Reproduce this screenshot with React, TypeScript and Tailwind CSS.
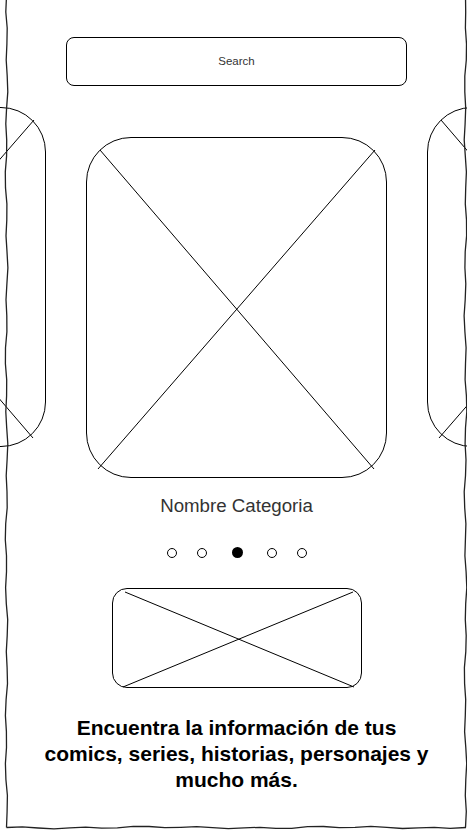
import React from 'react'

const font = "font-['Liberation_Sans',Arial,sans-serif]"

// hand-drawn looking line between two points
function wavy(x0: number, y0: number, x1: number, y1: number, seed: number) {
  const len = Math.hypot(x1 - x0, y1 - y0)
  const steps = Math.max(2, Math.round(len / 16))
  const nx = -(y1 - y0) / len
  const ny = (x1 - x0) / len
  let d = `M${x0} ${y0}`
  for (let i = 1; i <= steps; i++) {
    const t = i / steps
    const off =
      i === steps ? 0 : Math.sin(i * 1.7 + seed) * 0.8 + Math.sin(i * 0.53 + seed * 2) * 0.6
    const x = x0 + (x1 - x0) * t + nx * off
    const y = y0 + (y1 - y0) * t + ny * off
    d += ` L${x.toFixed(1)} ${y.toFixed(1)}`
  }
  return d
}

function Cross({ w, h, lines }: { w: number; h: number; lines: number[][] }) {
  return (
    <svg
      className="absolute inset-0"
      width={w}
      height={h}
      viewBox={`0 0 ${w} ${h}`}
      fill="none"
      stroke="#000"
      strokeWidth={1}
    >
      {lines.map((l, i) => (
        <line key={i} x1={l[0]} y1={l[1]} x2={l[2]} y2={l[3]} />
      ))}
    </svg>
  )
}

function Card({ w, h, className = '' }: { w: number; h: number; className?: string }) {
  return (
    <div
      className={`relative shrink-0 rounded-[45px] border border-black bg-white ${className}`}
      style={{ width: w, height: h }}
    >
      <Cross
        w={w}
        h={h}
        lines={[
          [13, 12, w - 14, h - 10],
          [w - 13, 12, 11, h - 10],
        ]}
      />
    </div>
  )
}

function Dot({ active }: { active?: boolean }) {
  return active ? (
    <span className="block h-[11px] w-[11px] rounded-full bg-black" />
  ) : (
    <span className="block h-[10px] w-[10px] rounded-full border border-black bg-white" />
  )
}

export default function App() {
  return (
    <div className={`relative h-[837px] w-[467px] overflow-hidden bg-white ${font}`}>
      <div className="flex flex-col items-center pl-[6px]">
        <div className="mt-[37px] flex h-[49px] w-[341px] items-center justify-center rounded-[8px] border border-black">
          <span className="text-[11.5px] text-[#333]">Search</span>
        </div>

        <div className="mt-[21px] flex w-[467px] items-start">
          <div className="-ml-[257px] flex shrink-0 items-start gap-[40px]">
            <Card w={300} h={340} />
            <Card w={301} h={341} className="mt-[30px]" />
            <Card w={300} h={340} />
          </div>
        </div>

        <p className="mt-[17px] text-[18.7px] leading-[22px] text-[#333]">Nombre Categoria</p>

        <div className="mt-[30px] flex items-center">
          <Dot />
          <span className="w-[20px]" />
          <Dot />
          <span className="w-[25px]" />
          <Dot active />
          <span className="w-[24px]" />
          <Dot />
          <span className="w-[20px]" />
          <Dot />
        </div>

        <div className="relative mt-[30px] h-[100px] w-[250px] rounded-[15px] border border-black">
          <Cross
            w={250}
            h={100}
            lines={[
              [12, 3, 241, 98],
              [240, 3, 10, 98],
            ]}
          />
        </div>

        <p className="mt-[27px] text-center text-[21px] font-bold leading-[26px] text-black">
          Encuentra la información de tus
          <br />
          comics, series, historias, personajes y
          <br />
          mucho más.
        </p>
      </div>

      {/* sketchy frame drawn on top */}
      <svg
        className="pointer-events-none absolute inset-0"
        width={467}
        height={837}
        viewBox="0 0 467 837"
        fill="none"
        stroke="#222"
        strokeWidth={1.3}
        strokeLinejoin="round"
      >
        <path d={wavy(6.5, -4, 6.5, 827.5, 1)} />
        <path d={wavy(6.5, 827.5, 466, 827.5, 3)} />
        <path d={wavy(465.5, -4, 465.5, 827.5, 5)} />
      </svg>
    </div>
  )
}
